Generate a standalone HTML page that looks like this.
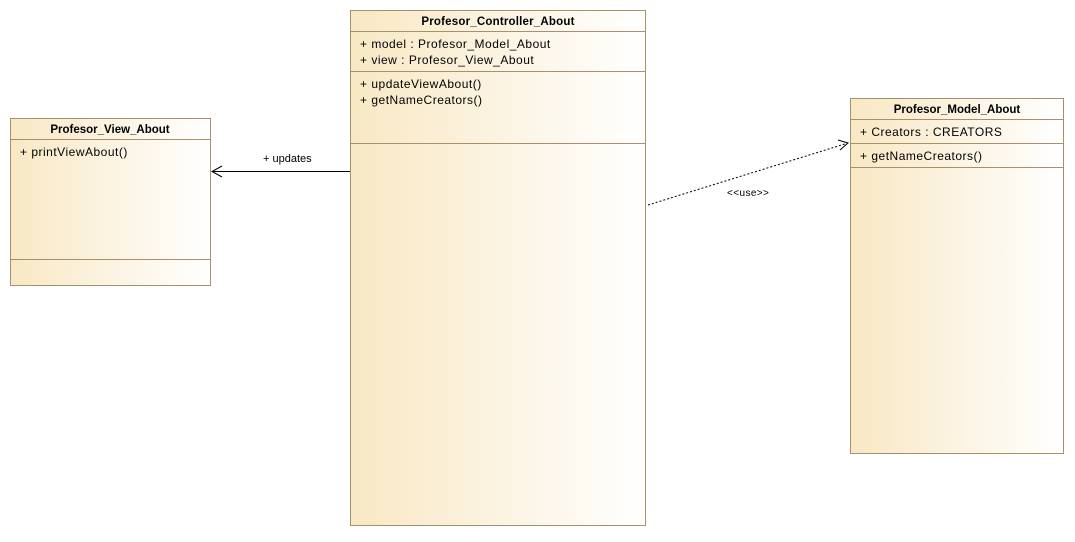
<!DOCTYPE html>
<html><head><style>
html,body{margin:0;padding:0;background:#fff;}
svg text{font-family:"Liberation Sans",Arial,sans-serif;font-size:12px;fill:#000;}
.n{letter-spacing:0.5px;}
</style></head><body>
<svg width="1075" height="537" xmlns="http://www.w3.org/2000/svg">
<defs>
<linearGradient id="g" x1="0" y1="0" x2="1" y2="0">
<stop offset="0" stop-color="#f8e8c4"/>
<stop offset="1" stop-color="#ffffff"/>
</linearGradient>
</defs>
<g stroke="#a8916a" stroke-width="1" fill="url(#g)">
<rect x="350.5" y="10.5" width="295" height="515"/>
<rect x="10.5" y="118.5" width="200" height="167"/>
<rect x="850.5" y="98.5" width="213" height="355"/>
</g>
<g stroke="#a8916a" stroke-width="1">
<line x1="350" y1="31.5" x2="646" y2="31.5"/>
<line x1="350" y1="71.5" x2="646" y2="71.5"/>
<line x1="350" y1="143.5" x2="646" y2="143.5"/>
<line x1="10" y1="139.5" x2="211" y2="139.5"/>
<line x1="10" y1="259.5" x2="211" y2="259.5"/>
<line x1="850" y1="119.5" x2="1064" y2="119.5"/>
<line x1="850" y1="143.5" x2="1064" y2="143.5"/>
<line x1="850" y1="167.5" x2="1064" y2="167.5"/>
</g>
<text x="498" y="25" text-anchor="middle" font-weight="bold" style="font-size:11.5px;letter-spacing:0.2px">Profesor_Controller_About</text>
<text class="n" x="360" y="48">+ model : Profesor_Model_About</text>
<text class="n" x="360" y="64">+ view : Profesor_View_About</text>
<text class="n" x="360" y="88">+ updateViewAbout()</text>
<text class="n" x="360" y="104">+ getNameCreators()</text>
<text x="110" y="133" text-anchor="middle" font-weight="bold" style="font-size:11.5px">Profesor_View_About</text>
<text class="n" x="20" y="156">+ printViewAbout()</text>
<text x="957" y="113" text-anchor="middle" font-weight="bold" style="font-size:11.5px">Profesor_Model_About</text>
<text class="n" x="860" y="136">+ Creators : CREATORS</text>
<text class="n" x="860" y="160">+ getNameCreators()</text>
<g stroke="#000" stroke-width="1" fill="none">
<line x1="350" y1="171.5" x2="212" y2="171.5"/>
<polyline points="222,166 212,171.5 222,177"/>
<line x1="648" y1="205" x2="848" y2="143" stroke-dasharray="2,2"/>
<polyline points="838,140 848,143 840,150"/>
</g>
<text x="263" y="162" style="font-size:11px">+ updates</text>
<text x="727" y="196" style="font-size:10px;letter-spacing:0.4px">&lt;&lt;use&gt;&gt;</text>
</svg>
</body></html>
